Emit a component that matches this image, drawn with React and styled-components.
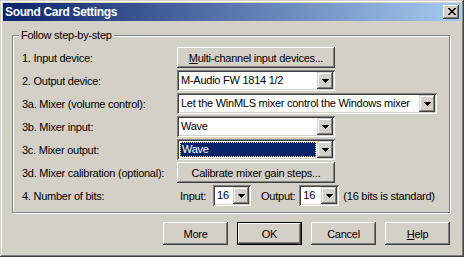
import React from "react";
import styled, { createGlobalStyle, css } from "styled-components";

const GlobalStyle = createGlobalStyle`
  html, body { margin: 0; padding: 0; background: #D4D0C8; }
  body { font-family: "Liberation Sans", Arial, sans-serif; font-size: 11px; letter-spacing: -0.25px; color: #000; }
  * { box-sizing: border-box; }
`;

const raised = css`
  box-shadow: inset -1px -1px 0 #404040, inset 1px 1px 0 #ffffff,
    inset -2px -2px 0 #808080, inset 2px 2px 0 #D4D0C8;
`;

const Window = styled.div`
  width: 464px;
  height: 257px;
  padding: 3px;
  background: #D4D0C8;
  box-shadow: inset -1px -1px 0 #404040, inset 1px 1px 0 #D4D0C8,
    inset -2px -2px 0 #808080, inset 2px 2px 0 #ffffff;
  display: flex;
  flex-direction: column;
`;

const TitleBar = styled.div`
  height: 18px;
  background: linear-gradient(to right, #0A246A, #A6CAF0);
  display: flex;
  align-items: center;
  justify-content: space-between;
  padding: 0 2px 0 2px;
`;

const Title = styled.span`
  color: #fff;
  font-weight: bold;
  font-size: 12px;
  letter-spacing: -0.35px;
  line-height: 18px;
`;

const CloseButton = styled.div`
  width: 16px;
  height: 14px;
  background: #D4D0C8;
  ${raised};
  display: flex;
  align-items: center;
  justify-content: center;
  padding-bottom: 1px;
  padding-left: 1px;
`;

const Body = styled.div`
  padding: 14px 11px 0 9px;
  display: flex;
  flex-direction: column;
`;

const GroupBox = styled.div`
  position: relative;
  height: 178px;
  border: 1px solid #808080;
  box-shadow: inset 1px 1px 0 #ffffff, 1px 1px 0 #ffffff;
  padding: 10px 0 0 9px;
`;

const Legend = styled.span`
  position: absolute;
  top: -7px;
  left: 6px;
  padding: 0 2px;
  background: #D4D0C8;
  line-height: 13px;
`;

const Rows = styled.div`
  display: grid;
  grid-template-columns: 155px auto;
  grid-auto-rows: 23px;
  align-items: center;
`;

const Label = styled.span`
  white-space: nowrap;
`;

const Controls = styled.div`
  display: flex;
  align-items: center;
`;

const PushButton = styled.div`
  width: ${(p) => p.$w}px;
  height: ${(p) => p.$h}px;
  background: #D4D0C8;
  ${raised};
  display: flex;
  align-items: center;
  justify-content: center;
  white-space: nowrap;
  ${(p) =>
    p.$default &&
    css`
      border: 1px solid #000;
    `}
`;

const U = styled.span`
  text-decoration: underline;
`;

const ComboBox = styled.div`
  width: ${(p) => p.$w}px;
  height: 21px;
  background: #fff;
  padding: 2px;
  display: flex;
  box-shadow: inset 1px 1px 0 #808080, inset -1px -1px 0 #ffffff,
    inset 2px 2px 0 #404040, inset -2px -2px 0 #D4D0C8;
`;

const ComboField = styled.div`
  flex: 1;
  display: flex;
  align-items: center;
  padding: ${(p) => (p.$focused ? "1px" : "0 0 0 2px")};
  white-space: nowrap;
  overflow: hidden;
  line-height: 17px;
`;

const FocusWrap = styled.div`
  flex: 1;
  align-self: stretch;
  display: flex;
  background: #000;
`;

const Selection = styled.div`
  flex: 1;
  background: #0A246A;
  background-clip: padding-box;
  border: 1px dotted #F2E27A;
  color: #fff;
  padding-left: 1px;
  line-height: 13px;
  display: flex;
  align-items: center;
`;

const DropButton = styled.div`
  width: 16px;
  height: 17px;
  flex: none;
  background: #D4D0C8;
  box-shadow: inset -1px -1px 0 #404040, inset 1px 1px 0 #D4D0C8,
    inset -2px -2px 0 #808080, inset 2px 2px 0 #ffffff;
  display: flex;
  align-items: center;
  justify-content: center;
  padding-top: 1px;
`;

const Small = styled.span`
  white-space: nowrap;
  margin-left: ${(p) => p.$ml || 0}px;
  margin-right: ${(p) => p.$mr || 0}px;
`;

const ButtonRow = styled.div`
  margin-top: 9px;
  display: flex;
  justify-content: flex-end;
  gap: 9px;
`;

const Arrow = () => (
  <svg width="7" height="4" viewBox="0 0 7 4" shapeRendering="crispEdges">
    <path d="M0 0h7v1H0z M1 1h5v1H1z M2 2h3v1H2z M3 3h1v1H3z" fill="#000" />
  </svg>
);

const CloseGlyph = () => (
  <svg width="8" height="7" viewBox="0 0 8 7" shapeRendering="crispEdges">
    <path
      d="M0 0h2v1H0z M6 0h2v1H6z M1 1h2v1H1z M5 1h2v1H5z M2 2h4v1H2z M3 3h2v1H3z M2 4h4v1H2z M1 5h2v1H1z M5 5h2v1H5z M0 6h2v1H0z M6 6h2v1H6z"
      fill="#000"
    />
  </svg>
);

const Combo = ({ width, value, focused }) => (
  <ComboBox $w={width}>
    <ComboField $focused={focused}>
      {focused ? (
        <FocusWrap>
          <Selection>{value}</Selection>
        </FocusWrap>
      ) : (
        value
      )}
    </ComboField>
    <DropButton>
      <Arrow />
    </DropButton>
  </ComboBox>
);

export default function App() {
  return (
    <>
      <GlobalStyle />
      <Window>
        <TitleBar>
          <Title>Sound Card Settings</Title>
          <CloseButton>
            <CloseGlyph />
          </CloseButton>
        </TitleBar>
        <Body>
          <GroupBox>
            <Legend>Follow step-by-step</Legend>
            <Rows>
              <Label>1. Input device:</Label>
              <Controls>
                <PushButton $w={158} $h={21}>
                  <span>
                    <U>M</U>ulti-channel input devices...
                  </span>
                </PushButton>
              </Controls>

              <Label>2. Output device:</Label>
              <Controls>
                <Combo width={158} value="M-Audio FW 1814 1/2" />
              </Controls>

              <Label>3a. Mixer (volume control):</Label>
              <Controls>
                <Combo
                  width={260}
                  value="Let the WinMLS mixer control the Windows mixer"
                />
              </Controls>

              <Label>3b. Mixer input:</Label>
              <Controls>
                <Combo width={158} value="Wave" />
              </Controls>

              <Label>3c. Mixer output:</Label>
              <Controls>
                <Combo width={158} value="Wave" focused />
              </Controls>

              <Label>3d. Mixer calibration (optional):</Label>
              <Controls>
                <PushButton $w={158} $h={21}>
                  Calibrate mixer gain steps...
                </PushButton>
              </Controls>

              <Label>4. Number of bits:</Label>
              <Controls>
                <Small $ml={3} $mr={7}>Input:</Small>
                <Combo width={38} value="16" />
                <Small $ml={10} $mr={4}>Output:</Small>
                <Combo width={40} value="16" />
                <Small $ml={4}>(16 bits is standard)</Small>
              </Controls>
            </Rows>
          </GroupBox>
          <ButtonRow>
            <PushButton $w={65} $h={23}>More</PushButton>
            <PushButton $w={65} $h={23} $default>
              OK
            </PushButton>
            <PushButton $w={65} $h={23}>Cancel</PushButton>
            <PushButton $w={65} $h={23}>
              <span>
                <U>H</U>elp
              </span>
            </PushButton>
          </ButtonRow>
        </Body>
      </Window>
    </>
  );
}
